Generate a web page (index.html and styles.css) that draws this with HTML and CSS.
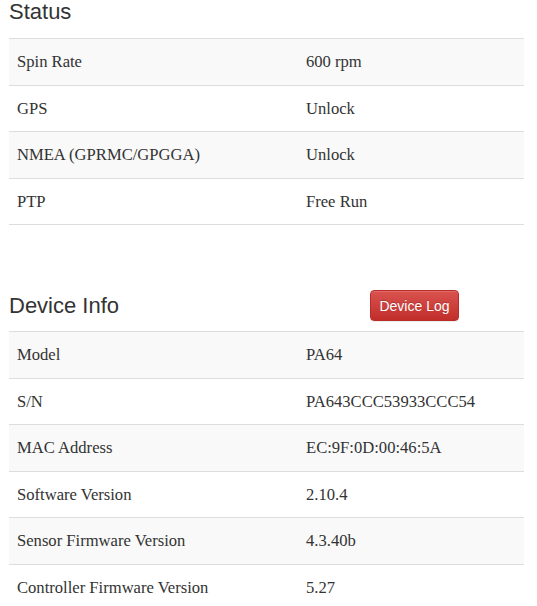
FILE: index.html
```html
<!DOCTYPE html>
<html>
<head>
<meta charset="utf-8">
<link rel="stylesheet" href="styles.css">
</head>
<body>
<div class="page">
  <section class="block">
    <h3 class="title title-status">Status</h3>
    <table class="info">
      <colgroup><col class="c1"><col></colgroup>
      <tr class="odd"><td>Spin Rate</td><td>600 rpm</td></tr>
      <tr><td>GPS</td><td>Unlock</td></tr>
      <tr class="odd"><td>NMEA (GPRMC/GPGGA)</td><td>Unlock</td></tr>
      <tr><td>PTP</td><td>Free Run</td></tr>
    </table>
  </section>
  <section class="block block-device">
    <div class="head">
      <h3 class="title">Device Info</h3>
      <button class="btn-danger">Device Log</button>
    </div>
    <table class="info">
      <colgroup><col class="c1"><col></colgroup>
      <tr class="odd"><td>Model</td><td>PA64</td></tr>
      <tr><td>S/N</td><td>PA643CCC53933CCC54</td></tr>
      <tr class="odd"><td>MAC Address</td><td>EC:9F:0D:00:46:5A</td></tr>
      <tr><td>Software Version</td><td>2.10.4</td></tr>
      <tr class="odd"><td>Sensor Firmware Version</td><td>4.3.40b</td></tr>
      <tr><td>Controller Firmware Version</td><td>5.27</td></tr>
    </table>
  </section>
</div>
</body>
</html>
```

FILE: styles.css
```css
html, body {
  margin: 0;
  padding: 0;
  background: #fff;
}
.page {
  padding: 0 13px 0 9px;
  color: #333;
}
.title {
  margin: 0;
  font-family: "Liberation Sans", Arial, sans-serif;
  font-weight: 400;
  font-size: 22px;
  line-height: 24px;
  color: #333;
}
.title-status {
  margin-bottom: 14px;
}
.block-device {
  margin-top: 65px;
}
.head {
  display: grid;
  grid-template-columns: 361px auto;
  align-items: center;
  margin-bottom: 10px;
}
.btn-danger {
  justify-self: start;
  width: 89px;
  height: 31px;
  padding: 0;
  border: 1px solid #b92c28;
  border-radius: 4px;
  background: linear-gradient(to bottom, #d9534f 0%, #c12e2a 100%);
  box-shadow: inset 0 1px 0 rgba(255,255,255,0.15), 0 1px 1px rgba(0,0,0,0.075);
  color: #fff;
  font-family: "Liberation Sans", Arial, sans-serif;
  font-size: 14px;
  text-shadow: 0 -1px 0 rgba(0,0,0,0.2);
}
.info {
  width: 100%;
  border-collapse: collapse;
  table-layout: fixed;
  font-family: "Liberation Serif", "Times New Roman", serif;
  font-size: 16.6px;
  color: #333;
}
.info col.c1 {
  width: 289px;
}
.info td {
  padding: 11px 8px;
  line-height: 23.5px;
  border-top: 1px solid #ddd;
  vertical-align: top;
}
.info tr:last-child td {
  border-bottom: 1px solid #ddd;
}
.info tr.odd td {
  background: #f9f9f9;
}
```
